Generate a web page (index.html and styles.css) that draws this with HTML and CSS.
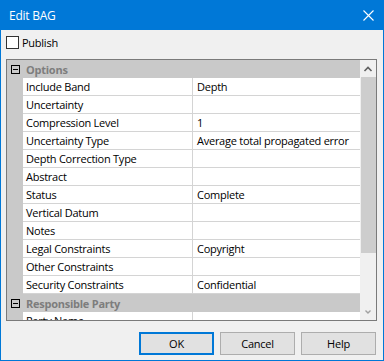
FILE: index.html
```html
<!DOCTYPE html>
<html lang="en">
<head>
    <meta charset="UTF-8">
    <title>Edit BAG</title>
    <link rel="stylesheet" href="styles.css">
</head>
<body>
    <div class="window">
        <div class="titlebar">
            <span class="title">Edit BAG</span>
            <svg class="close" width="11" height="11" viewBox="0 0 11 11">
                <path d="M0.5 0.5 L10.5 10.5 M10.5 0.5 L0.5 10.5" stroke="#fff" stroke-width="1.1" fill="none"/>
            </svg>
        </div>
        <div class="client">
            <label class="publish"><span class="checkbox"></span>Publish</label>
            <div class="grid">
                <div class="rows">
                    <div class="category"><span class="toggle"></span><span class="cat-name">Options</span></div>
                    <div class="prop"><span class="name">Include Band</span><span class="value">Depth</span></div>
                    <div class="prop"><span class="name">Uncertainty</span><span class="value"></span></div>
                    <div class="prop"><span class="name">Compression Level</span><span class="value">1</span></div>
                    <div class="prop"><span class="name">Uncertainty Type</span><span class="value">Average total propagated error</span></div>
                    <div class="prop"><span class="name">Depth Correction Type</span><span class="value"></span></div>
                    <div class="prop"><span class="name">Abstract</span><span class="value"></span></div>
                    <div class="prop"><span class="name">Status</span><span class="value">Complete</span></div>
                    <div class="prop"><span class="name">Vertical Datum</span><span class="value"></span></div>
                    <div class="prop"><span class="name">Notes</span><span class="value"></span></div>
                    <div class="prop"><span class="name">Legal Constraints</span><span class="value">Copyright</span></div>
                    <div class="prop"><span class="name">Other Constraints</span><span class="value"></span></div>
                    <div class="prop"><span class="name">Security Constraints</span><span class="value">Confidential</span></div>
                    <div class="category"><span class="toggle"></span><span class="cat-name">Responsible Party</span></div>
                    <div class="prop"><span class="name">Party Name</span><span class="value"></span></div>
                </div>
                <div class="scrollbar">
                    <div class="arrow">
                        <svg width="16" height="17" viewBox="0 0 16 17">
                            <polyline points="4.5,11 8,7.5 11.5,11" stroke="#606060" stroke-width="1.6" fill="none"/>
                        </svg>
                    </div>
                    <div class="thumb"></div>
                    <div class="track"></div>
                    <div class="arrow">
                        <svg width="16" height="17" viewBox="0 0 16 17">
                            <polyline points="5.5,7.5 8,10 10.5,7.5" stroke="#a0a0a0" stroke-width="1.4" fill="none"/>
                        </svg>
                    </div>
                </div>
            </div>
            <div class="buttons">
                <button class="button default">OK</button>
                <button class="button">Cancel</button>
                <button class="button">Help</button>
            </div>
        </div>
    </div>
</body>
</html>
```

FILE: styles.css
```css
body {
    margin: 0;
    font-family: "Open Sans", "Liberation Sans", sans-serif;
    font-size: 11px;
    letter-spacing: -0.25px;
    color: #000;
}
.window {
    width: 384px;
    height: 361px;
    box-sizing: border-box;
    border: 1px solid #0078d7;
    border-top: none;
    background-color: #f0f0f0;
    display: flex;
    flex-direction: column;
}
.titlebar {
    height: 30px;
    background-color: #0078d7; /* Windows accent blue */
    display: flex;
    align-items: center;
    justify-content: space-between;
    padding: 0 9px 0 8px;
    flex-shrink: 0;
}
.title {
    color: #fff;
    font-size: 12px;
}
.close {
    display: block;
}
.client {
    padding: 6px 6px 0 5px;
    display: flex;
    flex-direction: column;
}
.publish {
    display: flex;
    align-items: center;
    gap: 3px;
    height: 13px;
}
.checkbox {
    width: 13px;
    height: 13px;
    box-sizing: border-box;
    border: 1px solid #333;
    background-color: #fff;
}
.grid {
    margin-top: 10px;
    height: 262px;
    box-sizing: border-box;
    border: 1px solid #7a7a7a;
    display: flex;
    background-color: #fff;
}
.rows {
    width: 353px;
    overflow: hidden;
    background-color: #c9c9c9;
}
.category {
    height: 18px;
    display: flex;
    align-items: center;
    background-color: #c9c9c9;
}
.toggle {
    width: 9px;
    height: 9px;
    box-sizing: border-box;
    border: 1px solid #000;
    margin-left: 4px;
    position: relative;
}
.toggle::after {
    content: "";
    position: absolute;
    left: 1px;
    top: 3px;
    width: 5px;
    height: 1px;
    background-color: #000;
}
.cat-name {
    margin-left: 6px;
    font-weight: bold;
    color: #7d7d7d;
}
.prop {
    height: 18px;
    display: grid;
    grid-template-columns: 169px 1fr;
    margin-left: 16px;
}
.name,
.value {
    background-color: #fff;
    border-bottom: 1px solid #d4d4d4;
    line-height: 17px;
    white-space: nowrap;
    overflow: hidden;
}
.name {
    padding-left: 3px;
}
.value {
    padding-left: 4px;
    border-left: 1px solid #d4d4d4;
}
.scrollbar {
    width: 16px;
    display: flex;
    flex-direction: column;
    background-color: #f0f0f0;
}
.arrow {
    height: 17px;
    flex-shrink: 0;
}
.arrow svg {
    display: block;
}
.thumb {
    height: 176px;
    margin-left: 1px;
    background-color: #cdcdcd;
}
.track {
    flex: 1;
}
.buttons {
    margin-top: 11px;
    margin-right: 1px;
    display: flex;
    justify-content: flex-end;
    gap: 6px;
}
.button {
    width: 75px;
    height: 23px;
    box-sizing: border-box;
    background-color: #e1e1e1;
    border: 1px solid #adadad;
    font-family: "Open Sans", "Liberation Sans", sans-serif;
    font-size: 11px;
    letter-spacing: -0.25px;
    color: #000;
    padding: 0;
}
.button.default {
    border: 2px solid #0078d7;
}
```
